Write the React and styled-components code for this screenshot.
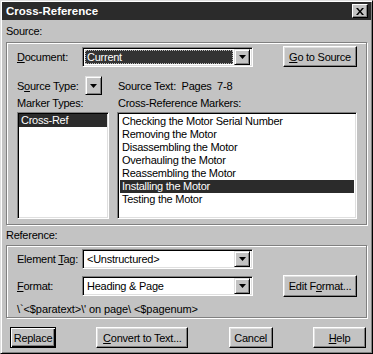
import React from 'react';
import styled, { createGlobalStyle } from 'styled-components';

const GlobalStyle = createGlobalStyle`
  html, body {
    margin: 0;
    padding: 0;
    background: #c0c0c0;
  }
  * {
    box-sizing: border-box;
  }
`;

const FACE = '#c3c3c3';
const DARK = '#808080';
const HILITE = '#2b2b2b';

const Window = styled.div`
  width: 373px;
  height: 354px;
  background: ${FACE};
  border: 1px solid;
  border-color: #dfdfdf #000 #000 #dfdfdf;
  box-shadow: inset 1px 1px #fff, inset -1px -1px ${DARK};
  font-family: "Liberation Sans", Arial, sans-serif;
  font-size: 11px;
  letter-spacing: -0.25px;
  color: #000;
  display: flex;
  flex-direction: column;
  padding: 1px;
`;

const TitleBar = styled.div`
  height: 18px;
  background: ${HILITE};
  display: flex;
  align-items: center;
  justify-content: space-between;
  padding: 0 3px 0 4px;
`;

const TitleText = styled.span`
  color: #fff;
  font-weight: bold;
  font-size: 11.5px;
  letter-spacing: 0;
`;

const CloseButton = styled.div`
  width: 16px;
  height: 14px;
  background: ${FACE};
  border: 1px solid;
  border-color: #fff #000 #000 #fff;
  box-shadow: inset -1px -1px ${DARK};
  display: flex;
  align-items: center;
  justify-content: center;
`;

const Body = styled.div`
  flex: 1;
  display: flex;
  flex-direction: column;
  padding: 0 4px;
`;

const GroupLabel = styled.div`
  height: ${p => p.$h}px;
  display: flex;
  align-items: center;
`;

const Panel = styled.div`
  height: ${p => p.$h}px;
  border: 1px solid ${DARK};
  box-shadow: inset 1px 1px #fff, 1px 1px #fff;
  padding: ${p => p.$pad};
  display: flex;
  flex-direction: column;
`;

const Row = styled.div`
  display: flex;
  align-items: center;
  height: ${p => p.$h}px;
  margin-top: ${p => p.$mt || 0}px;
`;

const Label = styled.span`
  width: ${p => p.$w}px;
  margin-left: ${p => p.$ml || 0}px;
  flex-shrink: 0;
  white-space: nowrap;
`;

const U = styled.span`
  text-decoration: underline;
  text-underline-offset: 1px;
`;

const Field = styled.div`
  width: ${p => p.$w}px;
  height: 20px;
  display: flex;
  background: #fff;
  border: 1px solid;
  border-color: ${DARK} #fff #fff ${DARK};
  box-shadow: inset 1px 1px #000, inset -1px -1px #dfdfdf;
  padding: 2px;
`;

const FieldValue = styled.div`
  flex: 1;
  display: flex;
  align-items: center;
  padding-left: 2px;
  white-space: nowrap;
  background: ${p => (p.$selected ? '#333' : 'transparent')};
  color: ${p => (p.$selected ? '#fff' : '#000')};
  outline: ${p => (p.$selected ? '1px dotted #bbb' : 'none')};
  outline-offset: -1px;
  margin-right: 1px;
`;

const ArrowButton = styled.div`
  width: ${p => p.$w || 16}px;
  height: ${p => p.$h || 16}px;
  flex-shrink: 0;
  background: ${FACE};
  border: 1px solid;
  border-color: #dfdfdf #000 #000 #dfdfdf;
  box-shadow: inset 1px 1px #fff, inset -1px -1px ${DARK};
  display: flex;
  align-items: center;
  justify-content: center;
  margin-top: ${p => p.$mt || 0}px;
`;

const Button = styled.div`
  width: ${p => p.$w}px;
  height: ${p => p.$h || 21}px;
  background: ${FACE};
  border: 1px solid;
  border-color: ${p => (p.$default ? '#000' : '#fff #000 #000 #fff')};
  box-shadow: ${p =>
    p.$default
      ? `inset 1px 1px #fff, inset -1px -1px #000, inset -2px -2px ${DARK}`
      : `inset -1px -1px ${DARK}, inset 1px 1px #dfdfdf`};
  display: flex;
  align-items: center;
  justify-content: center;
  white-space: nowrap;
  margin-left: ${p => p.$ml || 0}px;
`;

const ListRow = styled.div`
  display: flex;
  margin-top: 1px;
`;

const ListBox = styled.div`
  width: ${p => p.$w}px;
  height: 107px;
  margin-left: ${p => p.$ml || 0}px;
  background: #fff;
  border: 1px solid;
  border-color: ${DARK} #fff #fff ${DARK};
  box-shadow: inset 1px 1px #000, inset -1px -1px #dfdfdf;
  padding: ${p => p.$pad};
`;

const ListItem = styled.div`
  height: 13px;
  line-height: 13px;
  padding-left: 2px;
  white-space: nowrap;
  background: ${p => (p.$selected ? HILITE : 'transparent')};
  color: ${p => (p.$selected ? '#fff' : '#000')};
`;

const Formula = styled.div`
  margin-top: 5px;
  height: 14px;
  display: flex;
  align-items: center;
  letter-spacing: -0.1px;
`;

const Footer = styled.div`
  display: flex;
  justify-content: space-between;
  margin-top: 9px;
  padding: 0 1px 0 4px;
`;

const Arrow = () => (
  <svg width="7" height="4" viewBox="0 0 7 4">
    <path d="M0 0h7L3.5 4z" fill="#000" />
  </svg>
);

const CloseX = () => (
  <svg width="8" height="7" viewBox="0 0 8 7">
    <path d="M0 0h2l2 2.5L6 0h2L5 3.5 8 7H6L4 4.5 2 7H0l3-3.5z" fill="#000" />
  </svg>
);

const markers = [
  'Checking the Motor Serial Number',
  'Removing the Motor',
  'Disassembling the Motor',
  'Overhauling the Motor',
  'Reassembling the Motor',
  'Installing the Motor',
  'Testing the Motor',
];

function Dropdown({ width, value, selected }) {
  return (
    <Field $w={width}>
      <FieldValue $selected={selected}>{value}</FieldValue>
      <ArrowButton $w={16} $h={16} $mt={-1}>
        <Arrow />
      </ArrowButton>
    </Field>
  );
}

export default function App() {
  return (
    <>
      <GlobalStyle />
      <Window>
        <TitleBar>
          <TitleText>Cross-Reference</TitleText>
          <CloseButton>
            <CloseX />
          </CloseButton>
        </TitleBar>
        <Body>
          <GroupLabel $h={22}>Source:</GroupLabel>
          <Panel $h={183} $pad="3px 9px 0 10px">
            <Row $h={21}>
              <Label $w={65}>
                <U>D</U>ocument:
              </Label>
              <Dropdown width={171} value="Current" selected />
              <Button $w={74} $h={21} $ml={30}>
                <U>G</U>o to Source
              </Button>
            </Row>
            <Row $h={19} $mt={9}>
              <Label $w={68}>
                S<U>o</U>urce Type:
              </Label>
              <ArrowButton $w={17} $h={19}>
                <Arrow />
              </ArrowButton>
              <Label $w={150} $ml={16}>
                Source Text:&nbsp; Pages&nbsp; 7-8
              </Label>
            </Row>
            <Row $h={16}>
              <Label $w={101}>Marker Types:</Label>
              <Label $w={200}>Cross-Reference Markers:</Label>
            </Row>
            <ListRow>
              <ListBox $w={92} $pad="1px 1px">
                <ListItem $selected>Cross-Ref</ListItem>
              </ListBox>
              <ListBox $w={240} $ml={8} $pad="2px 2px">
                {markers.map((m, i) => (
                  <ListItem key={m} $selected={i === 5}>
                    {m}
                  </ListItem>
                ))}
              </ListBox>
            </ListRow>
          </Panel>
          <GroupLabel $h={20}>Reference:</GroupLabel>
          <Panel $h={73} $pad="3px 9px 0 10px">
            <Row $h={20}>
              <Label $w={65}>
                Element <U>T</U>ag:
              </Label>
              <Dropdown width={171} value="<Unstructured>" />
            </Row>
            <Row $h={22} $mt={6}>
              <Label $w={65}>
                <U>F</U>ormat:
              </Label>
              <Dropdown width={171} value="Heading & Page" />
              <Button $w={74} $h={22} $ml={30}>
                Edit F<U>o</U>rmat...
              </Button>
            </Row>
            <Formula>{"\\`<$paratext>\\' on page\\ <$pagenum>"}</Formula>
          </Panel>
          <Footer>
            <Button $w={46} $default>
              Replace
            </Button>
            <Button $w={92}>
              <U>C</U>onvert to Text...
            </Button>
            <Button $w={44}>Cancel</Button>
            <Button $w={53}>
              <U>H</U>elp
            </Button>
          </Footer>
        </Body>
      </Window>
    </>
  );
}
